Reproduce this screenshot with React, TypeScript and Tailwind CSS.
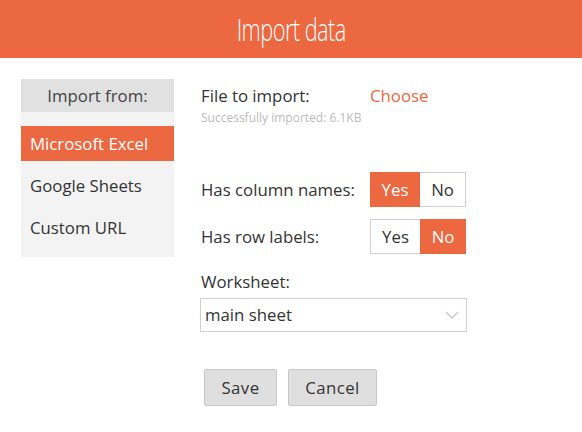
import React, { useState } from 'react';

const ORANGE = 'bg-[#ec6841]';

function Toggle({ value, onChange }: { value: boolean; onChange: (v: boolean) => void }) {
  return (
    <div className="flex h-[35px]">
      <button
        onClick={() => onChange(true)}
        className={`w-[50px] h-full border text-[16.8px] ${value ? 'bg-[#ec6841] border-[#ec6841] text-white' : 'bg-white border-[#cfcfcf] border-r-0 text-[#333]'}`}
      >
        Yes
      </button>
      <button
        onClick={() => onChange(false)}
        className={`w-[46px] h-full border text-[16.8px] ${!value ? 'bg-[#ec6841] border-[#ec6841] text-white' : 'bg-white border-[#cfcfcf] border-l-0 text-[#333]'}`}
      >
        No
      </button>
    </div>
  );
}

export default function App() {
  const [source, setSource] = useState('Microsoft Excel');
  const [colNames, setColNames] = useState(true);
  const [rowLabels, setRowLabels] = useState(false);

  return (
    <div className="w-[582px] h-[432px] bg-white text-[#333]" style={{ fontFamily: '"Open Sans", sans-serif' }}>
      {/* header */}
      <div className={`${ORANGE} h-[58px] flex items-center justify-center`}>
        <h1 className="text-white text-[32px] font-light scale-x-[0.68] tracking-tight leading-none">Import data</h1>
      </div>

      <div className="flex pl-[21px] pt-[21px]">
        {/* sidebar */}
        <div className="w-[153px] h-[178px] bg-[#f3f3f3]">
          <div className="h-[33px] bg-[#e1e1e1] flex items-center justify-center text-[16.8px] text-[#444]">Import from:</div>
          <div className="pt-[14px] flex flex-col gap-[7px]">
            {['Microsoft Excel', 'Google Sheets', 'Custom URL'].map((s) => (
              <button
                key={s}
                onClick={() => setSource(s)}
                className={`h-[35px] px-[9px] text-left text-[16.8px] ${source === s ? 'bg-[#ec6841] text-white' : 'text-[#333]'}`}
              >
                {s}
              </button>
            ))}
          </div>
        </div>

        {/* form */}
        <div className="ml-[26px] w-[267px] pt-[6px]">
          <div className="flex items-center h-[22px]">
            <span className="w-[170px] pl-px text-[16.8px]">File to import:</span>
            <span className="text-[16.8px] text-[#ec6841] cursor-pointer">Choose</span>
          </div>
          <p className="pl-px mt-[3px] text-[12px] text-[#bbbbbb] leading-[16px]">Successfully imported: 6.1KB</p>

          <div className="flex items-center mt-[46px]">
            <span className="w-[170px] pl-px text-[16.8px]">Has column names:</span>
            <Toggle value={colNames} onChange={setColNames} />
          </div>
          <div className="flex items-center mt-[12px]">
            <span className="w-[170px] pl-px text-[16.8px]">Has row labels:</span>
            <Toggle value={rowLabels} onChange={setRowLabels} />
          </div>

          <p className="pl-px mt-[17px] text-[16.8px] leading-[22px]">Worksheet:</p>
          <div className="mt-[5px] h-[34px] border border-[#cfcfcf] flex items-center justify-between pl-[4px] pr-[7px]">
            <span className="text-[16.8px]">main sheet</span>
            <svg width="14" height="8" viewBox="0 0 14 8" fill="none">
              <path d="M1 1l6 6 6-6" stroke="#c8c8c8" strokeWidth="1.3" />
            </svg>
          </div>

          <div className="flex gap-[11px] mt-[37px] pl-[4px]">
            <button className="w-[73px] h-[37px] bg-[#dfdfdf] border border-[#c8c8c8] rounded-[2px] text-[16.8px] tracking-wide">Save</button>
            <button className="w-[89px] h-[37px] bg-[#dfdfdf] border border-[#c8c8c8] rounded-[2px] text-[16.8px] tracking-wide">Cancel</button>
          </div>
        </div>
      </div>
    </div>
  );
}
